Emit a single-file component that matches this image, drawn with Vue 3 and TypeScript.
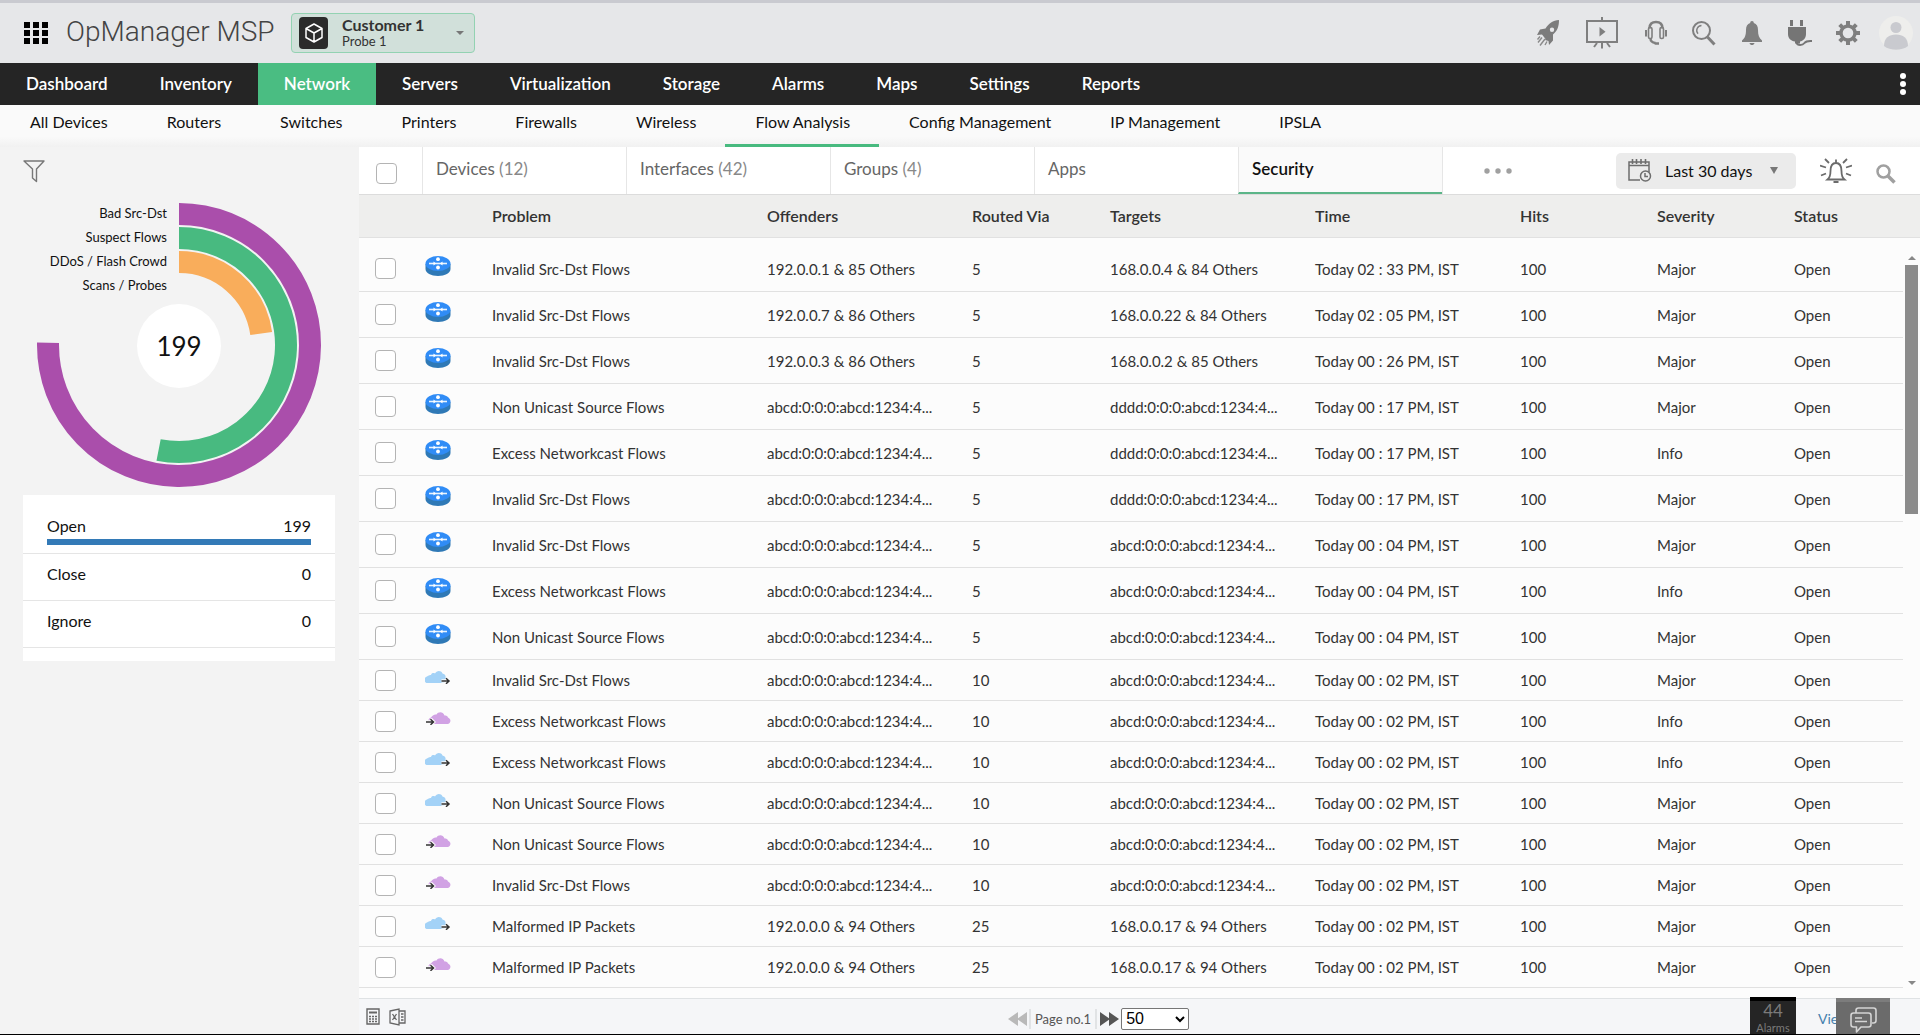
<script setup lang="ts">
import { ref } from 'vue'

type Kind = 'router' | 'out' | 'in'

interface FlowEvent {
  kind: Kind
  problem: string
  offenders: string
  via: number
  targets: string
  time: string
  severity: string
}

const mainTabs = ['Dashboard', 'Inventory', 'Network', 'Servers', 'Virtualization', 'Storage', 'Alarms', 'Maps', 'Settings', 'Reports']
const subTabs = ['All Devices', 'Routers', 'Switches', 'Printers', 'Firewalls', 'Wireless', 'Flow Analysis', 'Config Management', 'IP Management', 'IPSLA']
const flowTabs = [
  { name: 'Devices', count: 12 },
  { name: 'Interfaces', count: 42 },
  { name: 'Groups', count: 4 },
  { name: 'Apps' },
  { name: 'Security' },
]
const columns = ['Problem', 'Offenders', 'Routed Via', 'Targets', 'Time', 'Hits', 'Severity', 'Status']

const abcd = 'abcd:0:0:0:abcd:1234:4...'
const dddd = 'dddd:0:0:0:abcd:1234:4...'

function row(kind: Kind, problem: string, offenders: string, via: number, targets: string, clock: string, severity: string): FlowEvent {
  return { kind, problem, offenders, via, targets, time: `Today ${clock} PM, IST`, severity }
}

const events: FlowEvent[] = [
  row('router', 'Invalid Src-Dst Flows', '192.0.0.1 & 85 Others', 5, '168.0.0.4 & 84 Others', '02 : 33', 'Major'),
  row('router', 'Invalid Src-Dst Flows', '192.0.0.7 & 86 Others', 5, '168.0.0.22 & 84 Others', '02 : 05', 'Major'),
  row('router', 'Invalid Src-Dst Flows', '192.0.0.3 & 86 Others', 5, '168.0.0.2 & 85 Others', '00 : 26', 'Major'),
  row('router', 'Non Unicast Source Flows', abcd, 5, dddd, '00 : 17', 'Major'),
  row('router', 'Excess Networkcast Flows', abcd, 5, dddd, '00 : 17', 'Info'),
  row('router', 'Invalid Src-Dst Flows', abcd, 5, dddd, '00 : 17', 'Major'),
  row('router', 'Invalid Src-Dst Flows', abcd, 5, abcd, '00 : 04', 'Major'),
  row('router', 'Excess Networkcast Flows', abcd, 5, abcd, '00 : 04', 'Info'),
  row('router', 'Non Unicast Source Flows', abcd, 5, abcd, '00 : 04', 'Major'),
  row('out', 'Invalid Src-Dst Flows', abcd, 10, abcd, '00 : 02', 'Major'),
  row('in', 'Excess Networkcast Flows', abcd, 10, abcd, '00 : 02', 'Info'),
  row('out', 'Excess Networkcast Flows', abcd, 10, abcd, '00 : 02', 'Info'),
  row('out', 'Non Unicast Source Flows', abcd, 10, abcd, '00 : 02', 'Major'),
  row('in', 'Non Unicast Source Flows', abcd, 10, abcd, '00 : 02', 'Major'),
  row('in', 'Invalid Src-Dst Flows', abcd, 10, abcd, '00 : 02', 'Major'),
  row('out', 'Malformed IP Packets', '192.0.0.0 & 94 Others', 25, '168.0.0.17 & 94 Others', '00 : 02', 'Major'),
  row('in', 'Malformed IP Packets', '192.0.0.0 & 94 Others', 25, '168.0.0.17 & 94 Others', '00 : 02', 'Major'),
]

const rings = [
  { label: 'Bad Src-Dst', color: '#aa4eab', radius: 131, angle: 271, y: 15 },
  { label: 'Suspect Flows', color: '#48ba80', radius: 107, angle: 191, y: 39 },
  { label: 'DDoS / Flash Crowd', color: '#f9ad5b', radius: 83, angle: 82, y: 63 },
  { label: 'Scans / Probes', color: '#ddd', radius: 59, angle: 0, y: 87 },
]

// Clockwise arc from twelve o'clock, centred on (156, 142)
function arc(radius: number, angle: number): string {
  const a = (angle * Math.PI) / 180
  const x = 156 + radius * Math.sin(a)
  const y = 142 - radius * Math.cos(a)
  return `M156 ${142 - radius}A${radius} ${radius} 0 ${angle > 180 ? 1 : 0} 1 ${x} ${y}`
}

const states = [
  { name: 'Open', count: 199 },
  { name: 'Close', count: 0 },
  { name: 'Ignore', count: 0 },
]
const total = 199
const pageSize = ref('50')
</script>

<template>
  <div class="app">
    <header class="top">
      <button class="plain apps" aria-label="Applications">
        <svg width="24" height="24" viewBox="0 0 24 24" fill="#000">
          <path d="M0 1h6v6H0zM9 1h6v6H9zM18 1h6v6h-6zM0 9h6v6H0zM9 9h6v6H9zM18 9h6v6h-6zM0 17h6v6H0zM9 17h6v6H9zM18 17h6v6h-6z" />
        </svg>
      </button>
      <span class="brand">OpManager MSP</span>
      <button class="customer">
        <span class="cube">
          <svg width="20" height="22" viewBox="0 0 20 22" fill="none" stroke="#fff" stroke-width="1.5" stroke-linejoin="round">
            <path d="M10 2l8 4.500v9L10 20l-8-4.500v-9zM2 6.500l8 4.500 8-4.500M10 11v9" />
          </svg>
        </span>
        <span class="who"><b>Customer 1</b><span>Probe 1</span></span>
        <svg width="8" height="4" viewBox="0 0 8 4"><path d="M0 0h8L4 4z" fill="#777" /></svg>
      </button>
      <div class="tools">
        <button class="plain" aria-label="Get started">
          <svg width="24" height="28" viewBox="0 0 24 28">
            <path fill-rule="evenodd" fill="#7c7c7c" d="M23 1c-6 .5-10.500 3.500-13.500 8.500L4 10.500 1 16l5-.5 3.500 4.500-.5 1 3.500 1 .5 4 4-4.500v-6C21.500 12 23 7 23 1zM16 8.500a2.200 2.200 0 1 1 0 4.400 2.200 2.200 0 0 1 0-4.400z" />
            <path d="M6 18.500l-4 5M9 20l-5 6.500M11 22.500l-2 3.500M4 17.500l-2.500 3" stroke="#8a8a8a" stroke-width="1.400" fill="none" />
          </svg>
        </button>
        <button class="plain" aria-label="Presentation">
          <svg width="36" height="32" viewBox="0 0 36 32" fill="none" stroke="#7f7f7f" stroke-width="2">
            <path d="M3 4h30v21H3zM18 0v4M18 25v6.500M13 26l-3 4M23 26l3 4" />
            <path d="M15.500 10l6 4.800-6 4.700z" fill="#7f7f7f" stroke="none" />
          </svg>
        </button>
        <button class="plain" aria-label="Support">
          <svg width="24" height="26" viewBox="0 0 24 26" fill="none" stroke="#7f7f7f">
            <path d="M5.500 8.500C5.500 4 8 2 12 2s6.500 2 6.500 6.500" stroke-width="2.600" />
            <rect x="4.500" y="7.500" width="3.500" height="11" rx="1.500" stroke-width="1.600" />
            <rect x="16" y="7.500" width="3.500" height="11" rx="1.500" stroke-width="1.600" />
            <path d="M2 10v6.500M22 10v6.500" stroke-width="2" />
            <path d="M6.500 18.500c0 3 1.500 4 5 4.500M10.500 23.500h4.500" stroke-width="2.400" />
          </svg>
        </button>
        <button class="plain" aria-label="Search">
          <svg width="24" height="26" viewBox="0 0 24 26" fill="none" stroke="#7f7f7f">
            <circle cx="9.500" cy="10.500" r="8.500" stroke-width="2" />
            <path d="M9.500 5.500a5 5 0 0 0-3.500 8.300" stroke-width="1.400" />
            <path d="M15.500 17l7 7.500" stroke-width="3" />
          </svg>
        </button>
        <button class="plain" aria-label="Notifications">
          <svg width="24" height="26" viewBox="0 0 24 26" fill="#7f7f7f">
            <path d="M12 1c1.200 0 1.800.8 1.800 2 3 .9 4.200 3.500 4.200 7 0 5 1 8 4 10.500v1.500H2v-1.500C5 18 6 15 6 10c0-3.500 1.200-6.100 4.200-7 0-1.200.6-2 1.800-2zM9.500 23h5c-.4 1.400-1.300 2-2.500 2s-2.100-.6-2.500-2z" />
          </svg>
        </button>
        <button class="plain" aria-label="Add-ons">
          <svg width="24" height="28" viewBox="1 0 24 28">
            <path fill="#757575" d="M3 1h3v6H3zM13 1h3v6h-3zM1 8h18v7c0 4.500-3 7-6 7.500v2H8v-2C4 22 1 19.500 1 15z" />
            <path d="M9.500 23.500c1 3.500 6 3 8 .5s4-2 8-2" fill="none" stroke="#757575" stroke-width="2" />
          </svg>
        </button>
        <button class="plain" aria-label="Settings">
          <svg width="24" height="24" viewBox="0 0 24 24" fill="none" stroke="#7f7f7f">
            <circle cx="12" cy="12" r="7" stroke-width="3.400" />
            <path stroke-width="4" d="M12 4.500V0M12 19.500V24M4.500 12H0M19.500 12H24M6.700 6.700L3.700 3.700M17.300 17.300l3 3M6.700 17.300l-3 3M17.300 6.700l3-3" />
          </svg>
        </button>
      </div>
      <button class="plain avatar" aria-label="Profile">
        <svg width="34" height="36" viewBox="0 0 34 36">
          <circle cx="17" cy="18" r="17" fill="#eeeeec" />
          <circle cx="17" cy="12.500" r="5.500" fill="#c9cacf" />
          <path d="M5 31c0-8 5-11.500 12-11.500S29 23 29 31c-6 5-18 5-24 0z" fill="#c9cacf" />
        </svg>
      </button>
    </header>

    <nav class="main-nav" aria-label="Main">
      <a v-for="t in mainTabs" :key="t" href="#" :class="{ on: t === 'Network' }">{{ t }}</a>
      <button class="plain more" aria-label="More">
        <svg width="6" height="24" viewBox="0 0 6 24" fill="#fff"><circle cx="3" cy="4" r="3" /><circle cx="3" cy="12" r="3" /><circle cx="3" cy="20" r="3" /></svg>
      </button>
    </nav>
    <nav class="sub-nav" aria-label="Network">
      <a v-for="t in subTabs" :key="t" href="#" :class="{ on: t === 'Flow Analysis' }">{{ t }}</a>
    </nav>

    <div class="body">
      <aside class="side">
        <button class="plain filter" aria-label="Filter">
          <svg width="22" height="23" viewBox="0 0 22 23" fill="none" stroke="#777" stroke-width="1.400">
            <path d="M1 1h20l-7.500 8v12.500L9.500 18V9z" stroke-linejoin="round" />
          </svg>
        </button>
        <svg class="rings" viewBox="0 0 312 284">
          <path v-for="r in rings" :key="r.label" :d="arc(r.radius, r.angle)" fill="none" :stroke="r.color" stroke-width="22" />
          <circle cx="156" cy="143" r="42" fill="#fff" />
          <text v-for="r in rings" :key="r.label" x="144" :y="r.y" text-anchor="end" class="ring-label">{{ r.label }}</text>
          <text x="156" y="153" text-anchor="middle" class="ring-total">{{ total }}</text>
        </svg>
        <ul class="states">
          <li v-for="s in states" :key="s.name">
            <div class="state"><span>{{ s.name }}</span><span>{{ s.count }}</span></div>
            <div class="bar" :style="{ width: (s.count / total) * 100 + '%' }"></div>
          </li>
        </ul>
      </aside>

      <main class="content">
        <div class="tabs">
          <div class="all"><input type="checkbox" aria-label="Select all" /></div>
          <button v-for="t in flowTabs" :key="t.name" class="tab" :class="{ on: t.name === 'Security' }">
            {{ t.name }} <span v-if="t.count">({{ t.count }})</span>
          </button>
          <button class="plain dots" aria-label="More tabs">
            <svg width="28" height="6" viewBox="0 0 28 6" fill="#a0a0a0"><circle cx="3" cy="3" r="2.700" /><circle cx="14" cy="3" r="2.700" /><circle cx="25" cy="3" r="2.700" /></svg>
          </button>
          <div class="actions">
            <button class="period">
              <svg width="24" height="23" viewBox="0 0 24 23" fill="none" stroke="#6d6d6d" stroke-width="1.500">
                <path d="M12 21H1V3h20v10M1 6.500h20" />
                <path d="M4.500 0v5M8.500 0v5M13 0v5M17.500 0v5" stroke-width="1.600" />
                <circle cx="17.500" cy="17" r="5" fill="#ebebeb" />
                <path d="M17 14v3.500h3" />
              </svg>
              <span>Last 30 days</span>
              <svg width="8" height="7" viewBox="0 0 8 7"><path d="M0 0h8L4 7z" fill="#777" /></svg>
            </button>
            <button class="plain" aria-label="Alarm profile">
              <svg width="32" height="28" viewBox="0 0 32 28" fill="none" stroke="#6b6b6b" stroke-width="1.800">
                <path d="M7.500 22.500h17c-2.500-2-3-4-3-8.500 0-5-2-8-5.500-8s-5.500 3-5.500 8c0 4.500-.5 6.500-3 8.500zM16 2.500V6M13.500 25h5" />
                <path d="M5 2l4 4M27 2l-4 4M0 8.500l6 2M32 8.500l-6 2M1 18.500l5-2M31 18.500l-5-2" />
              </svg>
            </button>
            <button class="plain find" aria-label="Search flows">
              <svg width="20" height="20" viewBox="0 0 20 20" fill="none" stroke="#a0a0a0"><circle cx="7.500" cy="7.500" r="6" stroke-width="2.500" /><path d="M12 12l6.500 6.500" stroke-width="3.500" /></svg>
            </button>
          </div>
        </div>

        <div class="grid">
          <table>
            <colgroup>
              <col class="w-check" /><col class="w-icon" /><col class="w-problem" /><col class="w-wide" /><col class="w-via" />
              <col class="w-wide" /><col class="w-wide" /><col class="w-slim" /><col class="w-slim" /><col class="w-last" />
            </colgroup>
            <thead>
              <tr>
                <td></td>
                <td></td>
                <th v-for="c in columns" :key="c" scope="col">{{ c }}</th>
              </tr>
            </thead>
            <tbody>
              <tr class="space" aria-hidden="true"><td colspan="10"></td></tr>
              <tr v-for="(e, i) in events" :key="i" :class="{ cloud: e.kind !== 'router' }">
                <td class="check"><input type="checkbox" :aria-label="'Select row ' + (i + 1)" /></td>
                <td class="icon">
                  <svg v-if="e.kind === 'router'" width="26" height="20" viewBox="0 0 26 20">
                    <path d="M.5 8v5c0 4 5.500 7 12.500 7s12.500-3 12.500-7V8z" fill="#2f79b6" />
                    <ellipse cx="13" cy="7.500" rx="12.500" ry="7.500" fill="#308cf6" />
                    <path d="M4 7.500h18" stroke="#e9f4ff" stroke-width="1.600" />
                    <path d="M8.500 5.500l2.500 2-2.500 2zM17.500 5.500l-2.500 2 2.500 2z" fill="#fff" />
                    <circle cx="13" cy="3.200" r="1.900" fill="#fff" />
                    <circle cx="13" cy="11.500" r="1.900" fill="#fff" />
                  </svg>
                  <svg v-else-if="e.kind === 'out'" width="26" height="14" viewBox="1 0 26 14">
                    <path d="M2.500 13C-.5 12 0 7 3 6.500 4.500 5.500 5.500 5 7 5c.5-2 2.500-2.500 4-1.500C12.500.5 17 0 18.500 3.500c2 .5 3.500 1.500 3 4C23 9 22 12 20 13z" fill="#a3d2f7" />
                    <path d="M17.500 11H25M22 8l3 3-3 3" fill="none" stroke="#fcfcfc" stroke-width="3.500" />
                    <path d="M17.500 11H25M22 8.200l3 2.800-3 2.800" fill="none" stroke="#333" stroke-width="1.500" />
                  </svg>
                  <svg v-else width="26" height="14" viewBox="0 0 26 14">
                    <path d="M5 13C2 11 3.500 7 6 6.500 7 4.500 9.500 3 11.500 3.500 13 .5 18 0 19.500 4.500c2 0 3 .5 3.500 2 3.500 1.500 3 5.500 0 6.500z" fill="#d1a2e4" />
                    <path d="M1 11h7.500M5.500 8l3 3-3 3" fill="none" stroke="#fcfcfc" stroke-width="3.500" />
                    <path d="M1 11h7.500M5.500 8.200l3 2.800-3 2.800" fill="none" stroke="#333" stroke-width="1.500" />
                  </svg>
                </td>
                <td>{{ e.problem }}</td>
                <td>{{ e.offenders }}</td>
                <td>{{ e.via }}</td>
                <td>{{ e.targets }}</td>
                <td>{{ e.time }}</td>
                <td>100</td>
                <td>{{ e.severity }}</td>
                <td>Open</td>
              </tr>
            </tbody>
          </table>
          <div class="scroll" aria-hidden="true">
            <div class="scroll-head"></div>
            <svg width="8" height="4" viewBox="0 0 8 4"><path d="M0 4h8L4 0z" fill="#888" /></svg>
            <div class="track"><div class="thumb"></div></div>
            <svg width="8" height="4" viewBox="0 0 8 4"><path d="M0 0h8L4 4z" fill="#888" /></svg>
          </div>
        </div>

        <footer class="foot">
          <div class="exports">
            <button class="plain" aria-label="Export CSV">
              <svg width="14" height="17" viewBox="0 0 14 17" fill="none" stroke="#666" stroke-width="1.400">
                <path d="M1 1h12v15H1z" />
                <path d="M3 4.500h8" stroke-width="2" />
                <path d="M3 8.500h8M3 11h8M3 13.500h8" stroke-dasharray="2 1" />
              </svg>
            </button>
            <button class="plain" aria-label="Export XLS">
              <svg width="17" height="18" viewBox="0 0 17 18" fill="none" stroke="#666" stroke-width="1.300">
                <path d="M1 3l9-2v16l-9-2zM10 3h6v12h-6M3.500 6l4 6M7.500 6l-4 6M12 6h2.500M12 9h2.500M12 12h2.500" />
              </svg>
            </button>
          </div>
          <div class="pager">
            <button class="plain" aria-label="Previous page">
              <svg width="19" height="14" viewBox="0 0 19 14" fill="#b9b9b9"><path d="M10 0v14L0 7zM19 0v14L9 7z" /></svg>
            </button>
            <span class="page">Page no.1</span>
            <button class="plain" aria-label="Next page">
              <svg width="19" height="14" viewBox="0 0 19 14" fill="#555"><path d="M0 0v14l10-7zM9 0v14l10-7z" /></svg>
            </button>
            <select v-model="pageSize" aria-label="Rows per page">
              <option>50</option>
              <option>100</option>
            </select>
          </div>
          <div class="corner">
            <button class="alarms"><span class="num">44</span><span>Alarms</span></button>
            <span class="view">View</span>
            <button class="chat" aria-label="Chat">
              <svg width="27" height="27" viewBox="0 0 27 27" fill="none" stroke="#d4d4d4" stroke-width="1.600" stroke-linejoin="round">
                <path d="M6 6V3.500Q6 1 8.500 1h15Q26 1 26 3.500v10q0 2.500-2.500 2.500H22" />
                <path d="M3.500 6h15Q21 6 21 8.500v9q0 2.500-2.500 2.500H11l-4.500 5V20h-3Q1 20 1 17.500v-9Q1 6 3.500 6zM5 11h7M5 14.500h12" />
              </svg>
            </button>
          </div>
        </footer>
      </main>
    </div>
  </div>
</template>

<style>
body {
  margin: 0;
}
</style>

<style scoped>
.app,
.app * {
  box-sizing: border-box;
}
.app {
  display: flex;
  flex-direction: column;
  min-height: 100vh;
  font: 16px/20px Lato, "Liberation Sans", sans-serif;
  color: #333;
  background: #f3f3f3;
  border-bottom: 1px solid #000;
}
button {
  font: inherit;
  color: inherit;
  cursor: pointer;
}
.plain {
  display: flex;
  padding: 0;
  border: 0;
  background: none;
}
svg {
  display: block;
  flex: none;
}
a {
  text-decoration: none;
}
.top {
  display: flex;
  align-items: center;
  height: 63px;
  padding: 0 7px 0 24px;
  border-top: 3px solid #c9cad0;
  background: #e6e7e9;
}
.brand {
  width: 225px;
  margin-left: 18px;
  padding-bottom: 2px;
  font: 300 28px/36px Roboto, sans-serif;
  color: #444;
  white-space: nowrap;
}
.customer {
  display: flex;
  align-items: center;
  width: 184px;
  height: 40px;
  padding: 0 10px 0 7px;
  border: 1px solid #93d2b2;
  border-radius: 4px;
  background: #d1e0da;
  text-align: left;
}
.cube {
  display: flex;
  align-items: center;
  justify-content: center;
  width: 29px;
  height: 32px;
  border-radius: 4px;
  background: #2b2b2b;
}
.who {
  display: flex;
  flex: 1;
  flex-direction: column;
  margin-left: 14px;
  font-size: 13px;
  line-height: 16px;
}
.who b {
  font-size: 16px;
}
.tools {
  display: flex;
  align-items: center;
  gap: 24px;
  margin-left: auto;
}
.avatar {
  margin-left: 19px;
}
.main-nav {
  display: flex;
  align-items: stretch;
  height: 42px;
  padding-right: 14px;
  background: #252525;
}
.main-nav a {
  padding: 0 26px;
  color: #fff;
  font-size: 17px;
  font-weight: 600;
  line-height: 41px;
}
.main-nav .on {
  background: #4abd82;
}
.more {
  align-items: center;
  margin-left: auto;
}
.sub-nav {
  display: flex;
  height: 42px;
  background: linear-gradient(#fafafa 75%, #f1f1f1);
}
.sub-nav a {
  padding: 0 29px 0 30px;
  border-bottom: 3px solid transparent;
  color: #111;
  font-size: 16px;
  line-height: 34px;
}
.sub-nav .on {
  border-color: #48ba7f;
}
.body {
  display: flex;
  flex: 1;
}
.side {
  width: 359px;
  flex: none;
  padding: 13px 24px 0 23px;
}
.filter {
  height: 43px;
}
.rings {
  width: 100%;
}
.ring-label {
  font-size: 13px;
  fill: #111;
}
.ring-total {
  font-size: 26px;
  fill: #111;
}
.states {
  margin: 8px 0 0;
  padding: 11px 0 13px;
  list-style: none;
  background: #fff;
  color: #111;
}
.states li {
  height: 47px;
  padding: 10px 24px 0;
  border-bottom: 1px solid #e5e5e5;
}
.states li:first-child {
  height: 48px;
}
.state {
  display: flex;
  justify-content: space-between;
}
.bar {
  height: 6px;
  margin-top: 3px;
  background: #337ab7;
}
.content {
  display: flex;
  flex: 1;
  flex-direction: column;
  min-width: 0;
  background: #fcfcfc;
}
.tabs {
  display: flex;
  height: 48px;
  border-bottom: 1px solid #dcdcdc;
  background: #fff;
}
.all {
  width: 63px;
  padding: 16px 17px 0;
}
input[type="checkbox"] {
  display: block;
  appearance: none;
  width: 21px;
  height: 21px;
  margin: 0;
  border: 1px solid #b4b4b4;
  border-radius: 4px;
  background: #fff;
}
.tab {
  width: 204px;
  padding: 0 13px 4px;
  border: 0;
  border-left: 1px solid #e6e6e6;
  background: none;
  color: #666;
  font-size: 17px;
  line-height: 20px;
  text-align: left;
}
.tab span {
  color: #888;
}
.tab.on {
  padding-bottom: 2px;
  border-bottom: 2px solid #5bb588;
  background: #fafafa;
  color: #111;
  font-weight: 600;
}
.dots {
  align-items: center;
  padding-left: 41px;
  border-left: 1px solid #e6e6e6;
}
.actions {
  display: flex;
  align-items: center;
  gap: 24px;
  margin-left: auto;
  padding-right: 24px;
}
.find {
  padding-top: 6px;
}
.period {
  display: flex;
  align-items: center;
  width: 180px;
  height: 36px;
  padding: 0 18px 0 12px;
  border: 0;
  border-radius: 5px;
  background: #ebebeb;
  color: #111;
}
.period span {
  flex: 1;
  padding-left: 13px;
  text-align: left;
}
.grid {
  display: flex;
  margin-bottom: 10px;
}
table {
  flex: 1;
  width: 100%;
  table-layout: fixed;
  border-collapse: separate;
  border-spacing: 0;
}
.w-check { width: 63px; }
.w-icon { width: 70px; }
.w-problem { width: 275px; }
.w-via { width: 138px; }
.w-wide { width: 205px; }
.w-slim { width: 137px; }
.w-last { width: 109px; }
th,
td {
  height: 46px;
  padding: 0;
  border-bottom: 1px solid #e1e1e1;
  font-size: 15px;
  text-align: left;
  white-space: nowrap;
}
thead th,
thead td {
  height: 43px;
  background: #eeeeed;
}
thead th {
  padding-bottom: 1px;
  font-size: 16px;
  font-weight: 600;
}
.space td {
  height: 8px;
  border: 0;
}
.cloud td {
  height: 41px;
}
.check {
  padding-left: 16px;
}
.icon {
  padding: 0 0 6px 3px;
}
.scroll {
  display: flex;
  flex-direction: column;
  align-items: center;
  width: 17px;
  padding-bottom: 3px;
}
.scroll-head {
  width: 17px;
  height: 43px;
  margin-bottom: 18px;
  border-bottom: 1px solid #e1e1e1;
  background: #eeeeed;
}
.track {
  flex: 1;
  padding: 5px 0;
}
.thumb {
  width: 13px;
  height: 35%;
  background: #8b8b8b;
}
.foot {
  position: relative;
  display: flex;
  align-items: center;
  flex: 1;
  min-height: 36px;
  padding-left: 7px;
  border-top: 1px solid #dfe2e4;
  background: #f5f6f8;
}
.exports {
  display: flex;
  width: 642px;
  gap: 9px;
}
.pager {
  display: flex;
  align-items: center;
  padding-top: 4px;
  color: #555;
}
.page {
  margin: 0 3px 0 2px;
  padding: 0 4px;
  border: solid #e1e3e5;
  border-width: 0 2px;
  font-size: 13px;
}
select {
  width: 68px;
  height: 22px;
  margin: 0 0 0 2px;
  padding: 0;
  border: 1px solid #767676;
  border-radius: 2px;
  background: #fff;
  color: #000;
  font: 16px "Liberation Sans", sans-serif;
}
.corner {
  position: absolute;
  right: 30px;
  bottom: 0;
  display: flex;
  align-items: flex-end;
}
.alarms {
  display: flex;
  flex-direction: column;
  align-items: center;
  width: 46px;
  height: 37px;
  padding: 0;
  border: 0;
  border-top: 4px solid #000;
  background: #252525;
  color: #7a7a7a;
  font-size: 11px;
  line-height: 13px;
}
.num {
  font-size: 17px;
  line-height: 20px;
}
.view {
  width: 18px;
  margin-left: 22px;
  padding-bottom: 5px;
  color: #4580ad;
  font-size: 14px;
}
.chat {
  position: relative;
  width: 54px;
  height: 36px;
  padding: 5px 0 0 14px;
  border: 0;
  border-top: 4px solid #7c7c7c;
  background: #6b6b6b;
}
</style>
